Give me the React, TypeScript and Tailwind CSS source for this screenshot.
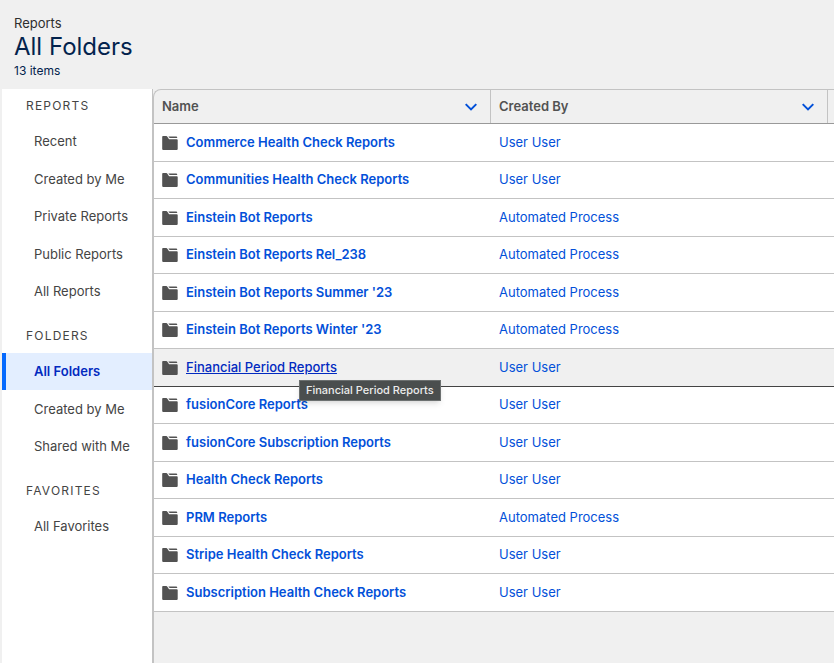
import React, { useState } from "react";

type Row = { name: string; createdBy: string };

const sections = [
  {
    title: "Reports",
    items: ["Recent", "Created by Me", "Private Reports", "Public Reports", "All Reports"],
  },
  { title: "Folders", items: ["All Folders", "Created by Me", "Shared with Me"] },
  { title: "Favorites", items: ["All Favorites"] },
];

const rows: Row[] = [
  { name: "Commerce Health Check Reports", createdBy: "User User" },
  { name: "Communities Health Check Reports", createdBy: "User User" },
  { name: "Einstein Bot Reports", createdBy: "Automated Process" },
  { name: "Einstein Bot Reports Rel_238", createdBy: "Automated Process" },
  { name: "Einstein Bot Reports Summer '23", createdBy: "Automated Process" },
  { name: "Einstein Bot Reports Winter '23", createdBy: "Automated Process" },
  { name: "Financial Period Reports", createdBy: "User User" },
  { name: "fusionCore Reports", createdBy: "User User" },
  { name: "fusionCore Subscription Reports", createdBy: "User User" },
  { name: "Health Check Reports", createdBy: "User User" },
  { name: "PRM Reports", createdBy: "Automated Process" },
  { name: "Stripe Health Check Reports", createdBy: "User User" },
  { name: "Subscription Health Check Reports", createdBy: "User User" },
];

const FolderIcon = () => (
  <svg viewBox="0 0 16 14" className="h-[14px] w-4 shrink-0 fill-[#525252]" aria-hidden="true">
    <path d="M1 0h3.400q.5 0 .8.4l1.500 2.300q.3.500.8.500h7.300q.9 0 .9.9v8.800q0 1.100-1.100 1.100H1.300Q.2 14 .2 12.900V.9Q.2 0 1 0z" />
    <path d="M6.700.6h7.500q1 0 1.100 1.300H7.700q-.3 0-.5-.3l-.7-.6q-.1-.4.2-.4z" />
  </svg>
);

const Chevron = () => (
  <svg viewBox="0 0 12 8" className="h-2 w-3 fill-none stroke-[#0250d9] stroke-2" aria-hidden="true">
    <path d="M.7 1.100 6 6.400l5.300-5.300" />
  </svg>
);

const HeaderCell = ({ label }: { label: string }) => (
  <th scope="col" className="h-[34px] p-0 text-left font-semibold">
    <div className="flex h-[33px] items-center justify-between border-r border-[#c3c3c3] pr-[13px] pl-2">
      <span className="pb-[2px]">{label}</span>
      <button type="button" aria-label={`Show ${label} column actions`}>
        <Chevron />
      </button>
    </div>
  </th>
);

const Sidebar = () => {
  const [selected, setSelected] = useState("Folders/All Folders");

  return (
    <nav
      aria-label="Report folders"
      className="flex w-[151px] shrink-0 flex-col gap-[17px] border-r border-[#c3c3c3] bg-white pt-2 text-[13px] leading-[18px] text-[#444]"
    >
      {sections.map((section) => (
        <section key={section.title}>
          <h2 className="pb-2 pl-6 text-xs leading-[18px] tracking-widest uppercase">
            {section.title}
          </h2>
          <ul>
            {section.items.map((item) => {
              const id = `${section.title}/${item}`;
              return (
                <li key={id} className="flex odd:h-[37px] even:h-[38px]">
                  <a
                    href="#"
                    onClick={(e) => {
                      e.preventDefault();
                      setSelected(id);
                    }}
                    className={`flex w-full items-center border-l-4 pb-px pl-7 ${
                      id === selected
                        ? "border-[#066afe] bg-[#e3eeff] font-semibold text-[#022ac0]"
                        : "border-transparent"
                    }`}
                  >
                    {item}
                  </a>
                </li>
              );
            })}
          </ul>
        </section>
      ))}
    </nav>
  );
};

const FolderTable = () => {
  const [hovered, setHovered] = useState("Financial Period Reports");

  return (
    <table className="w-full table-fixed border-separate border-spacing-0 text-[13px] leading-[18px]">
      <colgroup>
        <col className="w-[337px]" />
        <col className="w-[337px]" />
        <col />
      </colgroup>
      <thead className="text-[#525252] [&_th]:border-b [&_th]:border-[#999]">
        <tr>
          <HeaderCell label="Name" />
          <HeaderCell label="Created By" />
          <td className="border-b border-[#999]" />
        </tr>
      </thead>
      <tbody>
        {rows.map((row) => {
          const active = row.name === hovered;
          const cell = `border-b p-0 ${active ? "border-[#444] bg-[#f0f0f0]" : "border-[#c3c3c3] bg-white"}`;
          return (
            <tr
              key={row.name}
              className="odd:h-[38px] even:h-[37px]"
              onMouseEnter={() => setHovered(row.name)}
            >
              <td className={cell}>
                <div className="flex items-center gap-2 pl-2">
                  <FolderIcon />
                  <span className="relative pb-[2px]">
                    <a
                      href="#"
                      className={
                        active
                          ? "font-medium text-[#022ac0] underline"
                          : "font-semibold text-[#0250d9]"
                      }
                    >
                      {row.name}
                    </a>
                    {active && (
                      <span
                        role="tooltip"
                        className="absolute top-[22px] left-[113px] z-10 border border-[#6c7070] bg-[#4a4e4e] px-[6px] text-[11px] leading-[19px] font-medium whitespace-nowrap text-[#ececec] shadow-md"
                      >
                        {row.name}
                      </span>
                    )}
                  </span>
                </div>
              </td>
              <td className={cell}>
                <div className="pb-[2px] pl-2">
                  <a href="#" className="text-[#0250d9]">
                    {row.createdBy}
                  </a>
                </div>
              </td>
              <td className={cell} />
            </tr>
          );
        })}
      </tbody>
    </table>
  );
};

const App = () => {
  return (
    <div className="flex min-h-screen flex-col overflow-x-hidden bg-[#f0f0f0] pl-[2px] font-['Inter','Liberation_Sans',sans-serif]">
      <header className="px-3 pt-[14px] pb-[9px] text-[#03234d]">
        <p className="text-[13px] leading-[18px] text-[#2e2e2e]">Reports</p>
        <h1 className="text-2xl leading-[30px]">All Folders</h1>
        <p className="text-xs leading-[18px]">13 items</p>
      </header>
      <div className="flex flex-1">
        <Sidebar />
        <main className="min-w-0 flex-1 rounded-tl-lg border-t border-l border-[#c3c3c3]">
          <FolderTable />
        </main>
      </div>
    </div>
  );
};

export default App;
